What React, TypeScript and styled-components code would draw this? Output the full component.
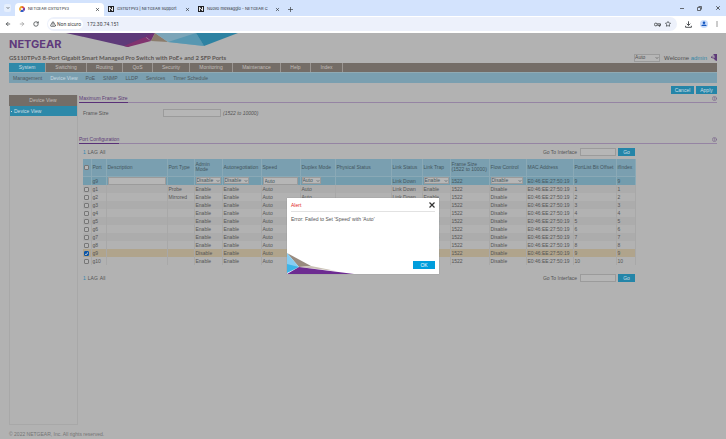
import React from 'react';
import styled, { createGlobalStyle } from 'styled-components';
import { Star, RotateCw, ArrowLeft, ArrowRight, ChevronDown, TriangleAlert, X, CircleHelp } from 'lucide-react';

const Global = createGlobalStyle`
  * { box-sizing: border-box; }
  body { margin: 0; font: 5px/8px "Liberation Sans", Arial, sans-serif; color: #545454; }
  button, input, select { font: inherit; color: inherit; margin: 0; padding: 0; border: 0; border-radius: 0; }
  button { background: none; }
  a { color: inherit; text-decoration: none; }
  svg { display: block; flex: none; }
`;

const Shell = styled.div`min-height: 100vh; display: flex; flex-direction: column;`;

/* Browser window */
const TabStrip = styled.div`
  height: 16px; background: #d3e3fd; display: flex; align-items: flex-end; padding: 0 5px 0 4px; color: #2c3033;
  font-family: Inter, sans-serif; font-size: 4px;
`;
const TabMenu = styled.button`
  width: 7px; height: 8px; border-radius: 2px; background: #e6effd; display: grid; place-items: center; margin: 0 4px 4px 0;
`;
const Tab = styled.div<{ $active?: boolean }>`
  width: ${p => (p.$active ? 89 : 90)}px; height: 13px; padding: 0 4px 1px; display: flex; align-items: center; gap: 3px;
  background: ${p => (p.$active ? '#fff' : 'transparent')}; border-radius: 4px 4px 0 0;
`;
const TabTitle = styled.span`flex: 1; white-space: nowrap;`;
const PlainButton = styled.button`display: grid; place-items: center;`;
const WindowButtons = styled.div`margin-left: auto; display: flex; gap: 13px; height: 16px; align-items: center;`;
const Toolbar = styled.div`
  height: 17px; background: #fff; display: flex; align-items: center; gap: 8px; padding: 0 8px 1px 5px; color: #3c4043;
`;
const Omnibox = styled.div`
  flex: 1; height: 14px; border-radius: 7px; background: #edf1fb; display: flex; align-items: center; gap: 4px;
  padding: 0 6px 0 1px; font-family: Roboto, sans-serif;
`;
const Chip = styled.span`
  height: 10px; border-radius: 5px; background: #fff; display: flex; align-items: center; gap: 1px; padding: 0 2px;
`;
const Address = styled.input`flex: 1; min-width: 0; background: none; outline: 0;`;

/* Page */
const Page = styled.div`position: relative; flex: 1; background: #b2b2b2; padding: 0 9px; display: flex; flex-direction: column;`;
const Masthead = styled.header`display: flex; gap: 5px; height: 19px;`;
const Logo = styled.div`width: 52px; padding-top: 5px; font: 700 11px/12px Inter, sans-serif; color: #5f3a7c; white-space: nowrap;`;
const TitleRow = styled.div`display: flex; justify-content: space-between; align-items: center; height: 11px;`;
const Title = styled.h1`margin: 0; font: 700 6px/8px Lato, sans-serif; color: #5c5652;`;
const Account = styled.div`display: flex; align-items: center; gap: 4px; color: #505050;`;
const Welcome = styled.span`font-size: 6px;`;
const Admin = styled.a`color: #3387a6;`;
const Nav = styled.nav`display: flex; height: 9px; background: #746d67; color: #c3bfbb;`;
const NavItem = styled.a<{ $w: number; $active?: boolean }>`
  width: ${p => p.$w}px; text-align: center; line-height: 9px; border-right: 1px solid #9b9692;
  color: ${p => (p.$active ? '#d2dfe4' : 'inherit')};
  background: ${p => (p.$active ? '#2f89a9' : 'transparent')};
`;
const SubNav = styled.nav`
  display: flex; gap: 8px; height: 11px; align-items: center; padding: 0 4px; background: #7a9fb0; border-top: 1px solid #8faab4; color: #4c575c;
`;
const SubItem = styled.a<{ $active?: boolean }>`color: ${p => (p.$active ? '#c9dae1' : 'inherit')};`;
const Columns = styled.div`flex: 1; display: flex; gap: 1px;`;
const Sidebar = styled.aside`width: 69px; margin-top: 12px; border: 1px solid #a8a8a8; border-top: 0;`;
const SideTitle = styled.h2`
  margin: 0 0 0 -1px; background: #746d67; color: #c3bfbb; font: 400 5px/11px "Liberation Sans", sans-serif; text-align: center;
`;
const SideLink = styled.a`
  display: flex; align-items: center; gap: 2px; height: 10px; padding-left: 1px; background: #2d89a9; color: #cfdee3;
`;
const Dot = styled.i`width: 1px; height: 1px; background: currentColor;`;
const Content = styled.main`flex: 1; min-width: 0; padding-top: 3px;`;
const Actions = styled.div`display: flex; justify-content: flex-end; gap: 2px;`;
const ActionButton = styled.button<{ $w: number }>`
  width: ${p => p.$w}px; height: 8px; line-height: 8px; background: #2485a8; color: #cfdfe5; text-align: center;
`;
const Section = styled.section`margin-bottom: 13px;`;
const SectionBar = styled.div`
  display: flex; justify-content: space-between; align-items: center; height: 9px; border-bottom: 1px solid #9584a3; color: #79658a;
`;
const SectionTitle = styled.h2`
  margin: 0; height: 9px; font: 400 5px/8px "Liberation Sans", sans-serif; color: #5c3b76; border-bottom: 1px solid #593078;
`;
const FieldRow = styled.div`display: flex; align-items: center; padding: 5px 4px; height: 19px;`;
const FieldLabel = styled.label`width: 80px;`;
const TextBox = styled.input<{ $w?: number }>`
  width: ${p => (p.$w ? p.$w + 'px' : '100%')}; height: 8px; background: #b6b6b6; border: 1px solid #9b9b9b; outline: 0; padding: 0 1px;
`;
const Hint = styled.em`margin-left: 2px;`;
const FormArea = styled.form`padding-top: 4px;`;
const TableTools = styled.div`
  width: 556px; padding-left: 4px; display: flex; justify-content: space-between; align-items: center; height: 8px;
`;
const Lags = styled.div`display: flex; gap: 2px;`;
const LagLink = styled.a<{ $on?: boolean }>`color: ${p => (p.$on ? '#2f86b0' : 'inherit')};`;
const GoTo = styled.label`display: flex; align-items: center; gap: 3px;`;
const GoGroup = styled.div`display: flex; align-items: center; gap: 2px;`;

const Grid = styled.table`
  width: 552px; margin: 3px 0 9px 4px; table-layout: fixed; border-collapse: collapse;
  td, th { padding: 0 0 0 1px; text-align: left; border-right: 1px solid #a8a8a8; white-space: pre; font-weight: 400; }
`;
const Col = styled.col<{ $w: number }>`width: ${p => p.$w}px;`;
const HeadRow = styled.tr`
  height: 17px; background: #7a9fb0; color: #43565e; line-height: 5px;
  && th { border-color: #8aa9b6; border-bottom: 1px solid #8aa9b6; }
`;
const EditRow = styled.tr`height: 9px; background: #739cad; color: #46565e; && td { border-color: #8aa9b6; }`;
const Row = styled.tr<{ $odd: boolean; $on: boolean }>`
  height: 8px; line-height: 7px; background: ${p => (p.$on ? '#b0a48c' : p.$odd ? '#acacac' : '#b2b2b2')};
`;
const Check = styled.input`
  appearance: none; display: block; width: 5px; height: 5px; border: 1px solid #777; border-radius: 1px; background: #b6b6b6;
  &:checked {
    border-color: #0a55a8;
    background: #0a55a8 url("data:image/svg+xml,%3Csvg xmlns='http://www.w3.org/2000/svg' viewBox='0 0 5 5'%3E%3Cpath d='M.7 2.5 2 3.9 4.4 1' fill='none' stroke='%23ccc'/%3E%3C/svg%3E") center / 5px 5px;
  }
`;
const PickWrap = styled.span<{ $w: number; $h: number }>`
  display: grid; align-items: center; width: ${p => p.$w}px; height: ${p => p.$h}px; background: #b6b6b6; border: 1px solid #9b9b9b;
  > * { grid-area: 1 / 1; }
  svg { justify-self: end; pointer-events: none; }
`;
const PickSelect = styled.select`
  appearance: none; width: 100%; height: 100%; line-height: 5px; background: none; outline: 0;
`;
const Footer = styled.footer`padding: 6px 0 1px; color: #747474; line-height: 7px;`;

/* Alert */
const Overlay = styled.div`position: absolute; inset: 0; display: flex; align-items: center; justify-content: center;`;
const Dialog = styled.div`
  width: 152px; background: #fff; color: #555; display: flex; flex-direction: column; box-shadow: 0 0 1px #888;
`;
const DialogHead = styled.div`
  margin: 0 4px; height: 14px; display: flex; align-items: center; justify-content: space-between; border-bottom: 1px solid #e2e2e2;
`;
const DialogTitle = styled.h2`margin: 0; font: 400 5px/8px "Liberation Sans", sans-serif; color: #e01f1f;`;
const DialogText = styled.p`margin: 3px 4px; min-height: 34px;`;
const DialogFoot = styled.div`display: flex; justify-content: space-between; align-items: flex-end;`;
const OkButton = styled.button`width: 22px; height: 8px; margin: 0 4px 5px 0; background: #009ddc; color: #f2fafe; line-height: 8px; text-align: center;`;

const Pick = ({ label, value, w, h = 7 }: { label: string; value: string; w: number; h?: number }) => (
  <PickWrap $w={w} $h={h}>
    <PickSelect aria-label={label} defaultValue={value}>
      <option>{value}</option>
    </PickSelect>
    <ChevronDown size={4} strokeWidth={4} />
  </PickWrap>
);

const NFavicon = () => (
  <svg width="6" height="6" viewBox="0 0 6 6">
    <rect width="6" height="6" fill="#202124" />
    <path d="M1.5 5V1.2L4.5 4.8V1" fill="none" stroke="#fff" strokeWidth=".9" />
  </svg>
);
const ColorFavicon = () => (
  <svg width="6" height="6" viewBox="0 0 6 6">
    <path d="M3 3 .5 1.4A3 3 0 0 1 3 0z" fill="#e8a020" />
    <path d="M3 3V0a3 3 0 0 1 2.6 1.5z" fill="#e94e3a" />
    <path d="m3 3 2.6-1.5A3 3 0 0 1 5 5.2z" fill="#7a3aa0" />
    <path d="m3 3 2 2.2A3 3 0 0 1 1 5.2z" fill="#2f5bc4" />
    <path d="M3 3 1 5.2A3 3 0 0 1 .5 1.4z" fill="#f0b040" />
    <circle cx="3" cy="3" r="1" fill="#fff" />
  </svg>
);
const KeyIcon = () => (
  <svg width="7" height="5" viewBox="0 0 7 5" fill="none" stroke="#3c4043" strokeWidth=".8">
    <circle cx="1.8" cy="2.5" r="1.4" /><path d="M3.2 1.8h3.3v1.4H3.2M5 3v1.2h1V3" />
  </svg>
);
const DownloadIcon = () => (
  <svg width="7" height="7" viewBox="0 0 7 7" fill="none" stroke="#3c4043" strokeWidth=".9">
    <path d="M3.5.3v4M1.7 2.7l1.8 1.8 1.8-1.8M.6 4.8v1.500h5.800V4.800" />
  </svg>
);
const LogOutIcon = () => (
  <svg width="6" height="7" viewBox="0 0 6 7">
    <path d="M2.5 0H6v7l-2.5-1V5h-1V4h1V1.500h-1z" fill="#5e3a79" />
    <path d="M0 3.200h2.800M1.500 2 .3 3.200l1.200 1.200" fill="none" stroke="#5e3a79" strokeWidth=".8" />
  </svg>
);

const navItems: [string, number][] = [
  ['System', 37], ['Switching', 41], ['Routing', 36], ['QoS', 30], ['Security', 37],
  ['Monitoring', 43], ['Maintenance', 48], ['Help', 30], ['Index', 32],
];
const subItems = ['Management', 'Device View', 'PoE', 'SNMP', 'LLDP', 'Services', 'Timer Schedule'];
const columns: [string, number][] = [
  ['', 8], ['Port', 15], ['Description', 61], ['Port Type', 27], ['Admin\nMode', 28], ['Autonegotiation', 39],
  ['Speed', 39], ['Duplex Mode', 35], ['Physical Status', 56], ['Link Status', 31], ['Link Trap', 28],
  ['Frame Size\n(1522 to 10000)', 39], ['Flow Control', 37], ['MAC Address', 47], ['PortList Bit Offset', 43], ['ifIndex', 19],
];
const mac = 'E0:46:EE:27:50:19';
const ports = Array.from({ length: 10 }, (_, i) => i + 1);

const Tools = () => (
  <TableTools>
    <Lags><LagLink href="#" $on>1</LagLink><LagLink href="#">LAG</LagLink><LagLink href="#">All</LagLink></Lags>
    <GoGroup>
      <GoTo>Go To Interface<TextBox $w={36} /></GoTo>
      <ActionButton type="button" $w={17}>Go</ActionButton>
    </GoGroup>
  </TableTools>
);

const CloseTab = () => <PlainButton aria-label="Close tab"><X size={5} strokeWidth={3} /></PlainButton>;

export default function App() {
  return (
    <Shell>
      <Global />
      <TabStrip>
        <TabMenu aria-label="Search tabs"><ChevronDown size={4} strokeWidth={4} /></TabMenu>
        <Tab $active><ColorFavicon /><TabTitle>NETGEAR GS110TPv3</TabTitle><CloseTab /></Tab>
        <Tab><NFavicon /><TabTitle>GS110TPv3 | NETGEAR Support</TabTitle><CloseTab /></Tab>
        <Tab><NFavicon /><TabTitle>Nuovo messaggio - NETGEAR C</TabTitle><CloseTab /></Tab>
        <Tab>
          <PlainButton aria-label="New tab"><svg width="5" height="5" viewBox="0 0 5 5"><path d="M2.5 0v5M0 2.5h5" stroke="#3c4043" strokeWidth=".7" /></svg></PlainButton>
        </Tab>
        <WindowButtons>
          <PlainButton aria-label="Minimize"><svg width="4" height="5" viewBox="0 0 4 5"><path d="M0 2.5h4" stroke="#333" strokeWidth=".7" /></svg></PlainButton>
          <PlainButton aria-label="Restore"><svg width="5" height="5" viewBox="0 0 5 5"><path d="M.5 1.5h3v3h-3zM1.5.5h3v3" fill="none" stroke="#333" strokeWidth=".7" /></svg></PlainButton>
          <PlainButton aria-label="Close"><X size={6} strokeWidth={3} /></PlainButton>
        </WindowButtons>
      </TabStrip>
      <Toolbar>
        <PlainButton aria-label="Back"><ArrowLeft size={6} strokeWidth={3} /></PlainButton>
        <PlainButton aria-label="Forward"><ArrowRight size={6} strokeWidth={3} color="#999" /></PlainButton>
        <PlainButton aria-label="Reload"><RotateCw size={6} strokeWidth={3} /></PlainButton>
        <Omnibox>
          <Chip><TriangleAlert size={6} strokeWidth={3} />Non sicuro</Chip>
          <Address aria-label="Address" defaultValue="172.30.74.151" />
          <KeyIcon />
          <Star size={6} strokeWidth={3} />
        </Omnibox>
        <DownloadIcon />
        <svg width="8" height="8" viewBox="0 0 8 8">
          <circle cx="4" cy="4" r="4" fill="#c9dcfb" /><circle cx="4" cy="2.8" r="1.3" fill="#1558c0" /><path d="M1.5 6v-.7Q2 4.500 4 4.500t2.500.8V6z" fill="#1558c0" />
        </svg>
        <svg width="2" height="6" viewBox="0 0 2 6"><path d="M1 .5v1M1 2.5v1M1 4.5v1" stroke="#333" /></svg>
      </Toolbar>

      <Page>
        <Masthead>
          <Logo>NETGEAR</Logo>
          <svg width="172" height="14" viewBox="0 0 172 14">
            <path d="M0 0h89L62 14z" fill="#5e3a79" />
            <path d="m58 13 21-9 6 4-23 6z" fill="#81336f" />
            <path d="m89 0-4 8-6-5z" fill="#713174" />
            <path d="m89 0-4 8 17 1z" fill="#8b7c6c" />
            <path d="M89 0h41l8 13-36-4z" fill="#7ca5b8" />
            <path d="m102 9 28-9 8 13z" fill="#5797b1" />
            <path d="M130 0h42l-34 13z" fill="#2d82a2" />
          </svg>
        </Masthead>
        <TitleRow>
          <Title>GS110TPv3 8-Port Gigabit Smart Managed Pro Switch with PoE+ and 2 SFP Ports</Title>
          <Account>
            <Pick label="Language" value="Auto" w={26} h={8} />
            <Welcome>Welcome <Admin href="#">admin</Admin></Welcome>
            <PlainButton aria-label="Log out"><LogOutIcon /></PlainButton>
          </Account>
        </TitleRow>
        <Nav>{navItems.map(([t, w], i) => <NavItem key={t} href="#" $w={w} $active={i === 0}>{t}</NavItem>)}</Nav>
        <SubNav>{subItems.map((t, i) => <SubItem key={t} href="#" $active={i === 1}>{t}</SubItem>)}</SubNav>
        <Columns>
          <Sidebar>
            <SideTitle>Device View</SideTitle>
            <SideLink href="#"><Dot />Device View</SideLink>
          </Sidebar>
          <Content>
            <Actions><ActionButton $w={23}>Cancel</ActionButton><ActionButton $w={21}>Apply</ActionButton></Actions>
            <Section>
              <SectionBar><SectionTitle>Maximum Frame Size</SectionTitle><CircleHelp size={5} strokeWidth={3} /></SectionBar>
              <FieldRow>
                <FieldLabel htmlFor="frame">Frame Size</FieldLabel>
                <TextBox id="frame" $w={58} /><Hint>(1522 to 10000)</Hint>
              </FieldRow>
            </Section>
            <SectionBar><SectionTitle>Port Configuration</SectionTitle><CircleHelp size={5} strokeWidth={3} /></SectionBar>
            <FormArea>
              <Tools />
              <Grid>
                <colgroup>{columns.map(([t, w]) => <Col key={t} $w={w} />)}</colgroup>
                <thead>
                  <HeadRow>{columns.map(([t]) => <th key={t} scope="col">{t || <Check type="checkbox" aria-label="Select all" />}</th>)}</HeadRow>
                </thead>
                <tbody>
                  <EditRow>
                    <td /><td>g9</td><td><TextBox aria-label="Description" $w={58} /></td><td />
                    <td><Pick label="Admin mode" value="Disable" w={25} /></td>
                    <td><Pick label="Autonegotiation" value="Disable" w={25} /></td>
                    <td><TextBox aria-label="Speed" $w={35} defaultValue="Auto" /></td>
                    <td><Pick label="Duplex mode" value="Auto" w={19} /></td>
                    <td /><td>Link Down</td>
                    <td><Pick label="Link trap" value="Enable" w={25} /></td>
                    <td>1522</td>
                    <td><Pick label="Flow control" value="Disable" w={32} /></td>
                    <td>{mac}</td><td>9</td><td>9</td>
                  </EditRow>
                  {ports.map(n => (
                    <Row key={n} $odd={n % 2 === 1} $on={n === 9}>
                      <td><Check type="checkbox" aria-label={`Select g${n}`} defaultChecked={n === 9} /></td>
                      <td>g{n}</td><td /><td>{n === 1 ? 'Probe' : n === 2 ? 'Mirrored' : ''}</td>
                      <td>{n === 9 ? 'Disable' : 'Enable'}</td><td>Enable</td><td>Auto</td><td>Auto</td><td />
                      <td>Link Down</td><td>Enable</td><td>1522</td><td>Disable</td><td>{mac}</td><td>{n}</td><td>{n}</td>
                    </Row>
                  ))}
                </tbody>
              </Grid>
              <Tools />
            </FormArea>
          </Content>
        </Columns>
        <Footer>© 2022 NETGEAR, Inc. All rights reserved.</Footer>

        <Overlay>
          <Dialog role="alertdialog" aria-labelledby="alert-title">
            <DialogHead>
              <DialogTitle id="alert-title">Alert</DialogTitle>
              <PlainButton aria-label="Close alert"><svg width="6" height="6" viewBox="0 0 6 6"><path d="m.5.5 5 5m0-5-5 5" stroke="#333" strokeWidth="1.2" /></svg></PlainButton>
            </DialogHead>
            <DialogText>Error: Failed to Set 'Speed' with 'Auto'</DialogText>
            <DialogFoot>
              <svg width="67" height="22" viewBox="0 0 67 22">
                <path d="m0 1 24 13-12 1z" fill="#998b7f" />
                <path d="m12 15 12-1 25 5z" fill="#c9c1b4" />
                <path d="m0 1 12 14H0z" fill="#86cdf2" />
                <path d="M0 12v9l12-6z" fill="#3db4e8" />
                <path d="m0 22 12-7 55 7z" fill="#6d2c91" />
              </svg>
              <OkButton>OK</OkButton>
            </DialogFoot>
          </Dialog>
        </Overlay>
      </Page>
    </Shell>
  );
}
